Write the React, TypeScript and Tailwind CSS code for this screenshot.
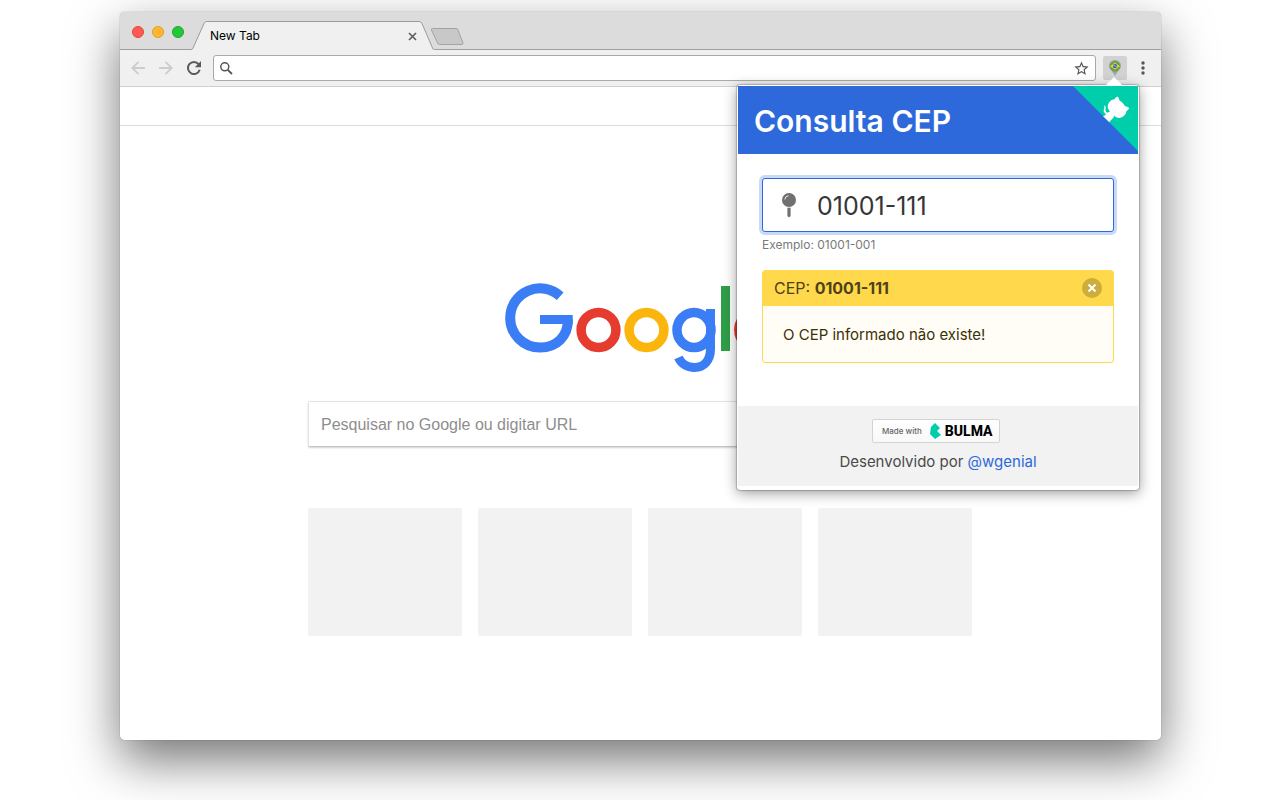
import React, { useState } from "react";

function TabStrip() {
  return (
    <div className="flex h-[38px] items-stretch rounded-t-[5px] bg-[#dcdcdc] shadow-[inset_0_-1px_0_#9f9f9f]">
      <div className="flex items-center gap-2 pt-[2px] pl-3">
        <button aria-label="Fechar janela" className="size-3 rounded-full border border-[#e2463f] bg-[#ff5951]" />
        <button aria-label="Minimizar janela" className="size-3 rounded-full border border-[#dea034] bg-[#ffb52d]" />
        <button aria-label="Maximizar janela" className="size-3 rounded-full border border-[#12ac28] bg-[#25c63a]" />
      </div>
      <div className="relative ml-[7px] flex w-[244px] items-center justify-between pt-[10px] pr-[18px] pl-[19px]">
        <svg className="absolute top-0 left-0 h-[38px] w-[244px]" viewBox="0 0 244 38" aria-hidden="true">
          <path d="M0 38V37.500H0.500Q1.500 37 2 36L13 11.500Q14 9.500 15.500 9.500H228Q230 9.500 231 11.500L241.500 36Q242 37.500 243.500 37.500H244V38Z" fill="#f0f0f0" />
          <path d="M0 37.500Q1.500 37.500 2 36L13 11.500Q14 9.500 15.500 9.500H228Q230 9.500 231 11.500L241.500 36Q242 37.500 243.500 37.500" fill="none" stroke="#9a9a9a" />
        </svg>
        <span className="relative text-[12px] leading-4 text-black">New Tab</span>
        <button aria-label="Fechar guia" className="relative flex size-[9px]">
          <svg viewBox="0 0 9 9" className="size-[9px]">
            <path d="M1 1L8 8M8 1L1 8" stroke="#5f5f5f" strokeWidth="1.700" />
          </svg>
        </button>
      </div>
      <button aria-label="Nova guia" className="mt-[15px] -ml-[6px] h-5 w-[36px]">
        <svg viewBox="0 0 36 20" className="h-5 w-[36px]">
          <path d="M3.500 1.500H27Q28.500 1.500 29 3L34 16Q34 17.500 33 17.500H10.500Q9 17.500 8.500 16L2.500 3Q2 1.500 3.500 1.500Z" fill="#c8c8c8" stroke="#a3a3a3" />
        </svg>
      </button>
    </div>
  );
}

function Toolbar() {
  return (
    <div className="flex h-[37px] items-center border-b border-[#cfcfcf] bg-[#f0f0f0]">
      <div className="flex items-center gap-[14px] pl-[11px]">
        <button aria-label="Voltar">
          <svg viewBox="0 0 14 14" className="size-[14px]" fill="none" stroke="#cdcdcd" strokeWidth="1.900">
            <path d="M14 7H1.500M7.500 0.800L1.300 7L7.500 13.200" />
          </svg>
        </button>
        <button aria-label="Avançar">
          <svg viewBox="0 0 14 14" className="size-[14px]" fill="none" stroke="#cdcdcd" strokeWidth="1.900">
            <path d="M0 7H12.500M6.500 0.800L12.700 7L6.500 13.200" />
          </svg>
        </button>
        <button aria-label="Recarregar">
          <svg viewBox="0 0 14 14" className="size-[14px]">
            <path d="M11.600 3.200A6 6 0 1 0 12.700 8.800" fill="none" stroke="#5a5a5a" strokeWidth="2" />
            <path d="M14 0V6.200H7.800Z" fill="#5a5a5a" />
          </svg>
        </button>
      </div>
      <div className="ml-3 flex h-[26px] min-w-0 flex-1 items-center rounded-[3px] border border-[#a9a9a9] bg-white pr-[5px] pl-[6px]">
        <svg viewBox="0 0 13 13" className="size-[13px] shrink-0" fill="none" stroke="#555">
          <circle cx="4.800" cy="4.800" r="4" strokeWidth="1.500" />
          <path d="M7.800 7.800L12 12" strokeWidth="1.800" />
        </svg>
        <input aria-label="Barra de endereço" className="min-w-0 flex-1 px-2 text-[13px] outline-none" />
        <button aria-label="Adicionar aos favoritos">
          <svg viewBox="0 0 24 24" className="size-[17px]" fill="#555">
            <path d="M22 9.240l-7.190-.62L12 2 9.190 8.630 2 9.240l5.460 4.730L5.820 21 12 17.270 18.180 21l-1.630-7.030L22 9.240zM12 15.400l-3.760 2.270 1-4.280-3.320-2.880 4.380-.38L12 6.100l1.710 4.040 4.380.38-3.320 2.880 1 4.280L12 15.400z" />
          </svg>
        </button>
      </div>
      <button aria-label="Consulta CEP" className="ml-[7px] flex size-6 items-center justify-center rounded-[2px] bg-[#d2d2d2]">
        <svg viewBox="0 0 16 16" className="size-4">
          <path d="M8 0C4.500 0 2 2.600 2 5.900C2 9 5.500 11 8 16C10.500 11 14 9 14 5.900C14 2.600 11.500 0 8 0Z" fill="#a4a4a4" />
          <circle cx="8" cy="6.200" r="5.200" fill="#69a346" />
          <path d="M3.200 6.200L8 2.800L12.800 6.200L8 9.600Z" fill="#f1dc3c" />
          <circle cx="8" cy="6.200" r="2.100" fill="#315da6" />
          <path d="M6.200 5.700Q8 5.400 9.700 6.900" fill="none" stroke="#d8e5ef" strokeWidth="0.700" />
        </svg>
      </button>
      <button aria-label="Menu" className="mr-4 ml-[14px]">
        <svg viewBox="0 0 4 14" className="h-[14px] w-1" fill="#555">
          <circle cx="2" cy="2" r="1.700" />
          <circle cx="2" cy="7" r="1.700" />
          <circle cx="2" cy="12" r="1.700" />
        </svg>
      </button>
    </div>
  );
}

function GoogleLogo() {
  return (
    <svg viewBox="0 0 275 92" className="h-[92px] w-[275px]" role="img" aria-label="Google" fill="none">
      <path d="M57.200 15.200A29.800 29.500 0 0 0 7.200 37A29.800 29.500 0 0 0 37 66.500C54 66.500 65 55 65 38.500" stroke="#3a7df4" strokeWidth="10" />
      <path d="M37 38.500H69.700" stroke="#3a7df4" strokeWidth="9" />
      <ellipse cx="95.500" cy="49" rx="17.400" ry="17.500" stroke="#e63c30" strokeWidth="9.500" />
      <ellipse cx="143.500" cy="49" rx="17.400" ry="17.500" stroke="#fcb50d" strokeWidth="9.500" />
      <ellipse cx="191" cy="49" rx="17" ry="17.500" stroke="#3a7df4" strokeWidth="9.500" />
      <path d="M207.500 28V68C207.500 80 200.500 86.500 191.500 86.500C184 86.500 178 82.500 175.500 76.500" stroke="#3a7df4" strokeWidth="9" />
      <path d="M222.500 5V70" stroke="#2f9e48" strokeWidth="9" />
      <path d="M235.500 55L269 41.500A17.500 17.500 0 1 0 268 58" stroke="#e63c30" strokeWidth="9" />
    </svg>
  );
}

function NewTabPage() {
  return (
    <div className="min-h-[653px] rounded-b-[5px] bg-white">
      <div className="h-[39px] border-b border-[#dcdcdc]" />
      <div className="mx-auto flex w-[665px] max-w-full flex-col pt-[155px]">
        <div className="flex justify-center">
          <GoogleLogo />
        </div>
        <input
          aria-label="Pesquisar no Google ou digitar URL"
          placeholder="Pesquisar no Google ou digitar URL"
          className="mt-7 h-[46px] w-full rounded-[2px] border border-[#e3e3e3] border-b-[#c4c4c4] bg-white px-3 pt-[2px] font-['Liberation_Sans',Arial,sans-serif] text-[16px] shadow-[0_1px_2px_rgba(0,0,0,0.18)] outline-none placeholder:text-[#8e8e8e] placeholder:opacity-100"
        />
        <div className="mt-[61px] grid grid-cols-4 gap-4 pr-px">
          <div className="h-32 rounded-[2px] bg-[#f2f2f2]" />
          <div className="h-32 rounded-[2px] bg-[#f2f2f2]" />
          <div className="h-32 rounded-[2px] bg-[#f2f2f2]" />
          <div className="h-32 rounded-[2px] bg-[#f2f2f2]" />
        </div>
      </div>
    </div>
  );
}

function CepPopup() {
  const [cep, setCep] = useState("01001-111");
  return (
    <div className="absolute top-[73px] right-[22px] w-[402px] rounded-[3px] border border-white bg-white pb-[3px] shadow-[0_0_1px_1px_rgba(0,0,0,0.2),0_3px_14px_rgba(0,0,0,0.4)]">
      <svg viewBox="0 0 18 9" className="absolute -top-[9px] right-[15px] h-[9px] w-[18px]" aria-hidden="true">
        <path d="M0 9L9 0L18 9Z" fill="#fff" />
      </svg>
      <header className="relative flex h-[68px] items-center bg-[#2d69da] px-4 pt-[2px]">
        <h1 className="text-[30px] leading-9 font-semibold text-white">Consulta CEP</h1>
        <a href="#github" aria-label="GitHub" className="absolute top-0 right-0">
          <svg viewBox="0 0 250 250" className="size-[65px]">
            <path d="M0 0L250 250V0Z" fill="#00cda9" />
            <path d="M128.300 109C113.800 99.700 119 89.600 119 89.600C122 82.700 120.500 78.600 120.500 78.600C119.200 72 123.400 76.300 123.400 76.300C127.300 80.900 125.500 87.300 125.500 87.300C122.900 97.600 130.600 101.900 134.400 103.200" fill="#fff" />
            <path d="M115 115C114.900 115.100 118.700 116.500 119.800 115.400L133.700 101.600C136.900 99.200 139.900 98.400 142.200 98.600C133.800 88 127.500 74.400 143.800 58C148.500 53.400 154 51.200 159.700 51C160.300 49.400 163.200 43.600 171.400 40.100C171.400 40.100 176.100 42.500 178.800 56.200C183.100 58.600 187.200 61.800 190.900 65.400C194.500 69 197.700 73.200 200.100 77.600C213.800 80.200 216.300 84.900 216.300 84.900C212.700 93.100 206.900 96 205.400 96.600C205.100 102.400 203 107.800 198.300 112.500C181.900 128.900 168.300 122.500 157.700 114.100C157.900 116.900 156.700 120.900 152.700 124.900L141 136.500C139.800 137.700 141.600 141.900 141.800 141.800Z" fill="#fff" />
          </svg>
        </a>
      </header>
      <div className="flex flex-col px-6 pt-6 pb-[43px]">
        <div className="flex h-[54px] items-center rounded-[3px] border border-[#2d69da] bg-white pl-[18px] shadow-[0_0_0_3px_rgba(45,105,218,0.25)]">
          <svg viewBox="0 0 16 26" className="h-[26px] w-4 shrink-0" aria-hidden="true">
            <circle cx="8" cy="8" r="7" fill="#707070" />
            <path d="M3.800 7.500Q4 4.200 7.500 3.700" fill="none" stroke="#eee" strokeWidth="1" />
            <path d="M6.400 15.400Q8 15.900 9.600 15.400V24L8 25.500L6.400 24Z" fill="#707070" />
          </svg>
          <input
            id="cep"
            aria-describedby="cep-exemplo"
            aria-label="CEP"
            value={cep}
            onChange={(e) => setCep(e.target.value)}
            className="ml-5 min-w-0 flex-1 pt-[2px] text-[25px] leading-9 text-[#363636] outline-none"
          />
        </div>
        <p id="cep-exemplo" className="mt-1 text-[12px] leading-[18px] text-[#7a7a7a]">
          Exemplo: 01001-001
        </p>
        <article className="mt-4 overflow-hidden rounded-[3px] border border-[#ffd84c] bg-[#fffdf5]">
          <div className="flex h-[35px] items-center justify-between bg-[#ffd84c] px-[11px] pb-[2px] text-[16px] leading-5 text-[#4d4217]">
            <p>
              CEP: <strong className="font-bold">01001-111</strong>
            </p>
            <button aria-label="Fechar" className="flex size-5 items-center justify-center rounded-full bg-[#ccad3d]">
              <svg viewBox="0 0 10 10" className="size-[10px]">
                <path d="M1.500 1.500L8.500 8.500M8.500 1.500L1.500 8.500" stroke="#fff" strokeWidth="2" />
              </svg>
            </button>
          </div>
          <p className="px-5 pt-[17px] pb-[15px] text-[15px] leading-6 text-[#3b3108]">O CEP informado não existe!</p>
        </article>
      </div>
      <footer className="flex h-20 flex-col items-center bg-[#f2f2f2] pt-[13px] text-[15px] text-[#4a4a4a]">
        <a
          href="#bulma"
          className="mr-1 flex h-6 w-32 items-center rounded-[2px] border border-[#d4d4d4] bg-gradient-to-b from-white to-[#f8f8f8] pl-[9px]"
        >
          <span className="text-[8px] leading-3 font-medium text-[#666]">Made with</span>
          <svg viewBox="3.750 0 16.500 24" className="ml-2 h-4 w-[11px]" aria-hidden="true">
            <path d="M11.250 0l-6 6-1.500 10.500 7.500 7.500 9-6-6-6 4.500-4.500-7.500-7.500Z" fill="#00cda9" />
          </svg>
          <span className="ml-1 font-['Roboto',sans-serif] text-[14px] leading-5 font-extrabold text-black">BULMA</span>
        </a>
        <p className="mt-[7px] leading-6">
          Desenvolvido por{" "}
          <a href="#wgenial" className="text-[#2d69da]">
            @wgenial
          </a>
        </p>
      </footer>
    </div>
  );
}

export default function App() {
  return (
    <main className="min-h-screen overflow-hidden bg-white pt-3 pr-[119px] pb-[60px] pl-[120px] font-['Inter',sans-serif]">
      <div className="relative rounded-[5px] shadow-[0_0_1px_rgba(0,0,0,0.6),0_20px_50px_rgba(0,0,0,0.55)]">
        <TabStrip />
        <Toolbar />
        <NewTabPage />
        <CepPopup />
      </div>
    </main>
  );
}
